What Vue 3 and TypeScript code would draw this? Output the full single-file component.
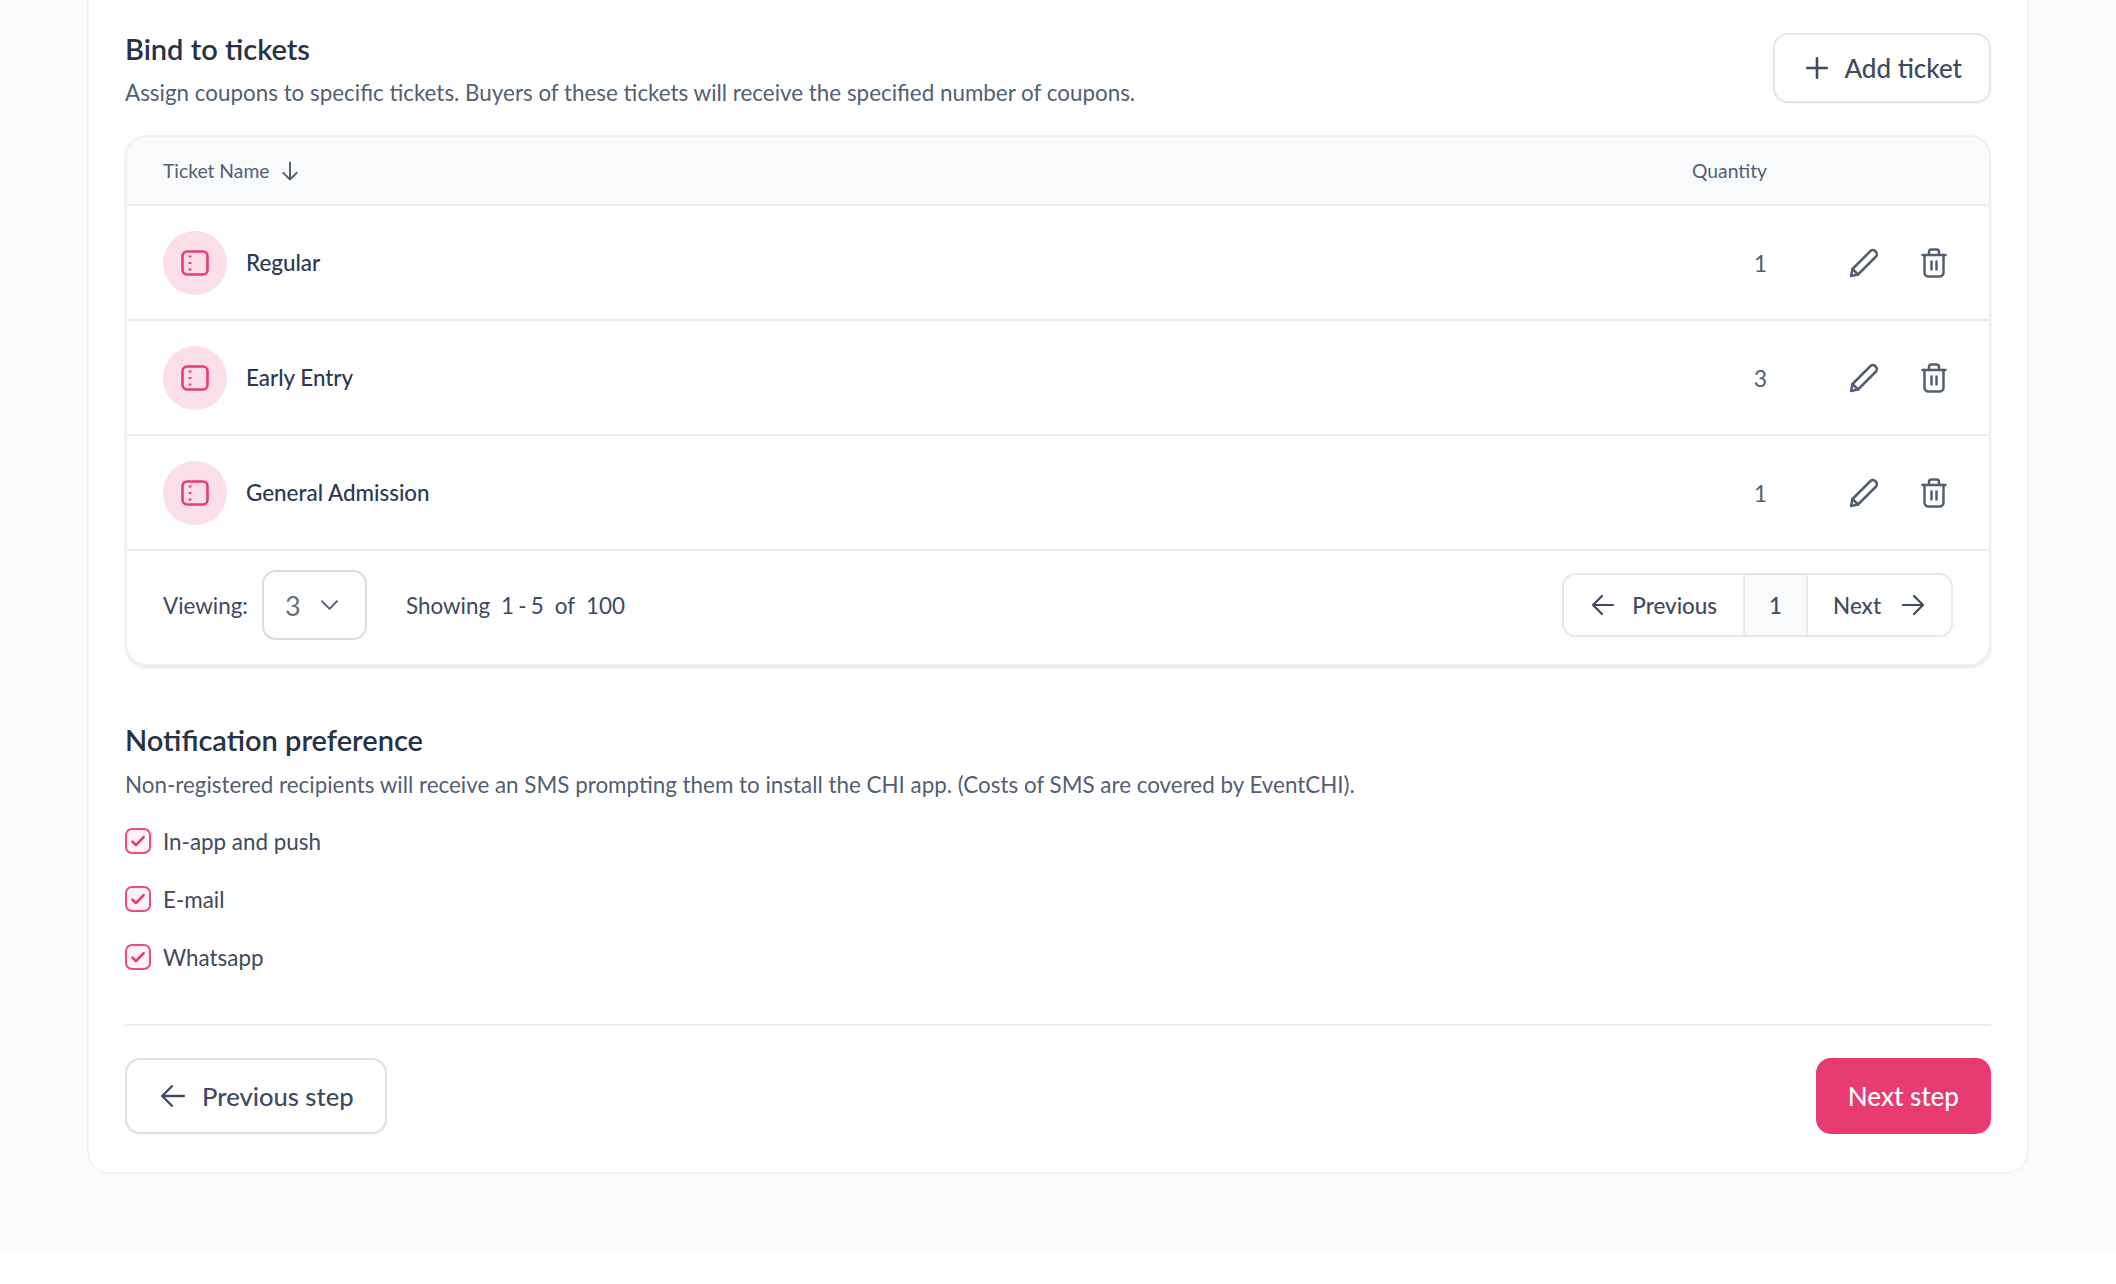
<template>
  <div class="page">
    <div class="card">
      <section class="bind">
        <div class="section-head">
          <div>
            <h2 class="section-title">Bind to tickets</h2>
            <p class="section-desc">
              Assign coupons to specific tickets. Buyers of these tickets will receive the specified number of coupons.
            </p>
          </div>
          <button class="btn add-btn">
            <svg class="icon-plus" viewBox="0 0 24 24" fill="none" stroke="currentColor" stroke-width="2.4" stroke-linecap="round">
              <path d="M12 3v18M3 12h18" />
            </svg>
            Add ticket
          </button>
        </div>

        <div class="table">
          <div class="table-head">
            <div class="col-name">
              Ticket Name
              <svg class="icon-sort" viewBox="0 0 18 18" fill="none" stroke="currentColor" stroke-width="1.6" stroke-linecap="round" stroke-linejoin="round">
                <path d="M9 2v14M3.5 10.5 9 16l5.5-5.5" />
              </svg>
            </div>
            <div class="col-qty">Quantity</div>
            <div class="col-actions"></div>
          </div>

          <div v-for="ticket in tickets" :key="ticket.name" class="table-row">
            <div class="col-name">
              <span class="ticket-badge">
                <svg viewBox="0 0 28 26" fill="none" stroke="#e83b72" stroke-width="2.6">
                  <rect x="1.5" y="1.5" width="25" height="23" rx="4.5" />
                  <path d="M9 5.5v2M9 12v2M9 18.5v2" stroke-width="2.8" />
                </svg>
              </span>
              <span class="ticket-name">{{ ticket.name }}</span>
            </div>
            <div class="col-qty qty-value">{{ ticket.quantity }}</div>
            <div class="col-actions">
              <svg class="icon-edit" viewBox="0 0 30 30" fill="none" stroke="currentColor" stroke-width="2.5" stroke-linecap="round" stroke-linejoin="round">
                <path d="M2 28l1.5-7L21.5 3a3.2 3.2 0 0 1 4.5 0l1 1a3.2 3.2 0 0 1 0 4.5L9 26.5z" />
                <path d="M3.5 21 9 26.5" />
              </svg>
              <svg class="icon-trash" viewBox="0 0 26 30" fill="none" stroke="currentColor" stroke-width="2.5" stroke-linecap="round" stroke-linejoin="round">
                <path d="M1.5 7h23M8 7V4a2.5 2.5 0 0 1 2.5-2.5h5A2.5 2.5 0 0 1 18 4v3" />
                <path d="M3.5 7v17.5a4 4 0 0 0 4 4h11a4 4 0 0 0 4-4V7" />
                <path d="M10.5 13.5v8M15.5 13.5v8" />
              </svg>
            </div>
          </div>

          <div class="table-foot">
            <div class="viewing">
              <span class="viewing-label">Viewing:</span>
              <div class="select">
                <span>3</span>
                <svg viewBox="0 0 20 12" fill="none" stroke="currentColor" stroke-width="2" stroke-linecap="round" stroke-linejoin="round">
                  <path d="M2 2l8 8 8-8" />
                </svg>
              </div>
              <div class="showing">
                <span>Showing</span>
                <span class="range">1 - 5</span>
                <span>of</span>
                <span>100</span>
              </div>
            </div>
            <div class="pager">
              <button class="pager-btn pager-prev">
                <svg class="icon-arrow" viewBox="0 0 24 24" fill="none" stroke="currentColor" stroke-width="2.2" stroke-linecap="round" stroke-linejoin="round">
                  <path d="M22 12H2M11 3l-9 9 9 9" />
                </svg>
                Previous
              </button>
              <span class="pager-num">1</span>
              <button class="pager-btn pager-next">
                Next
                <svg class="icon-arrow" viewBox="0 0 24 24" fill="none" stroke="currentColor" stroke-width="2.2" stroke-linecap="round" stroke-linejoin="round">
                  <path d="M2 12h20M13 3l9 9-9 9" />
                </svg>
              </button>
            </div>
          </div>
        </div>
      </section>

      <section class="notify">
        <h2 class="section-title">Notification preference</h2>
        <p class="section-desc">
          Non-registered recipients will receive an SMS prompting them to install the CHI app. (Costs of SMS are covered by EventCHI).
        </p>
        <div class="checks">
          <label v-for="channel in channels" :key="channel" class="check">
            <span class="checkbox">
              <svg viewBox="0 0 16 16" fill="none" stroke="#e83b72" stroke-width="2.3" stroke-linecap="round" stroke-linejoin="round">
                <path d="M3 8.5l3.2 3.2L13 4.5" />
              </svg>
            </span>
            {{ channel }}
          </label>
        </div>
      </section>

      <div class="steps">
        <button class="btn step-btn">
          <svg class="icon-step" viewBox="0 0 24 24" fill="none" stroke="currentColor" stroke-width="2.2" stroke-linecap="round" stroke-linejoin="round">
            <path d="M22 12H2M11 3l-9 9 9 9" />
          </svg>
          Previous step
        </button>
        <button class="btn next-btn">Next step</button>
      </div>
    </div>
  </div>
</template>

<script setup lang="ts">
interface Ticket {
  name: string;
  quantity: number;
}

const tickets: Ticket[] = [
  { name: "Regular", quantity: 1 },
  { name: "Early Entry", quantity: 3 },
  { name: "General Admission", quantity: 1 },
];

const channels = ["In-app and push", "E-mail", "Whatsapp"];
</script>

<style scoped>
.page {
  height: 1251px;
  box-sizing: border-box;
  padding: 0 87px;
  background: #fbfbfc;
  font-family: "Lato", sans-serif;
  color: #3d4a60;
}
.card {
  box-sizing: border-box;
  height: 1174px;
  padding: 31px 36px 0;
  background: #fff;
  border: 2px solid #f0f1f4;
  border-top: none;
  border-radius: 0 0 22px 22px;
}
.section-head {
  display: flex;
  justify-content: space-between;
  align-items: flex-start;
  height: 104px;
}
.section-title {
  margin: 0;
  font-size: 29px;
  line-height: 36px;
  font-weight: 600;
  color: #263246;
}
.section-desc {
  margin: 11px 0 0;
  font-size: 22.4px;
  line-height: 30px;
  color: #525f73;
}
.btn {
  box-sizing: border-box;
  display: inline-flex;
  align-items: center;
  font-family: inherit;
  font-weight: 500;
  background: #fff;
  color: #3d4a60;
  cursor: pointer;
}
.add-btn {
  height: 70px;
  margin-top: 2px;
  padding: 0 27px 0 29px;
  gap: 14px;
  font-size: 26px;
  border: 2px solid #e4e7ec;
  border-radius: 15px;
  box-shadow: 0 1px 2px rgba(16, 24, 40, 0.05);
}
.icon-plus {
  width: 26px;
  height: 26px;
}
.table {
  border: 2px solid #eef0f3;
  border-radius: 22px;
  overflow: hidden;
  box-shadow: 0 2px 3px rgba(16, 24, 40, 0.1);
}
.table-head,
.table-row {
  display: flex;
  align-items: center;
  padding: 0 36px;
}
.table-head {
  height: 67px;
  background: #f9fafb;
  border-bottom: 2px solid #eaecf0;
  font-size: 19.3px;
  color: #525f73;
}
.table-row {
  height: 113px;
  border-bottom: 2px solid #eaecf0;
}
.col-name {
  flex: 1;
  display: flex;
  align-items: center;
  gap: 10px;
}
.col-qty {
  width: 100px;
  text-align: right;
}
.col-actions {
  width: 186px;
  display: flex;
  align-items: center;
  justify-content: flex-end;
  gap: 42px;
  color: #525f73;
}
.icon-sort {
  width: 22px;
  height: 22px;
}
.ticket-badge {
  width: 64px;
  height: 64px;
  margin-right: 9px;
  border-radius: 50%;
  background: #fbdfe8;
  display: flex;
  align-items: center;
  justify-content: center;
}
.ticket-badge svg {
  width: 28px;
  height: 26px;
}
.ticket-name {
  font-size: 22.4px;
  font-weight: 500;
  color: #2b3950;
}
.qty-value {
  font-size: 23px;
  color: #525f73;
}
.icon-edit {
  width: 30px;
  height: 30px;
}
.icon-trash {
  width: 26px;
  height: 30px;
  margin-right: 6px;
}
.table-foot {
  box-sizing: border-box;
  height: 113px;
  padding: 0 36px 5px;
  display: flex;
  align-items: center;
  justify-content: space-between;
}
.viewing {
  display: flex;
  align-items: center;
  font-size: 22.4px;
}
.viewing-label {
  margin-right: 14px;
}
.select {
  box-sizing: border-box;
  width: 105px;
  height: 70px;
  padding: 0 26px 0 21px;
  display: flex;
  align-items: center;
  justify-content: space-between;
  border: 2px solid #d8dce3;
  border-radius: 14px;
  font-size: 27px;
  color: #667085;
}
.select svg {
  width: 19px;
  height: 12px;
  color: #525f73;
}
.showing {
  margin-left: 39px;
  display: flex;
  gap: 11px;
}
.range {
  word-spacing: -1.5px;
}
.pager {
  display: flex;
  height: 64px;
  box-sizing: border-box;
  border: 2px solid #e4e7ec;
  border-radius: 14px;
  overflow: hidden;
}
.pager-btn {
  border: none;
  background: #fff;
  display: flex;
  align-items: center;
  font-family: inherit;
  font-size: 22.4px;
  font-weight: 500;
  color: #3d4a60;
}
.pager-prev {
  padding: 0 26px 0 27px;
  gap: 17px;
}
.pager-next {
  padding: 0 26px 0 25px;
  gap: 20px;
}
.icon-arrow {
  width: 24px;
  height: 24px;
}
.pager-num {
  width: 65px;
  display: flex;
  align-items: center;
  justify-content: center;
  background: #f9fafb;
  border-left: 2px solid #e8eaee;
  border-right: 2px solid #e8eaee;
  box-sizing: border-box;
  font-size: 22.4px;
  font-weight: 500;
}
.notify {
  margin-top: 56px;
}
.notify .section-desc {
  margin-top: 12px;
}
.checks {
  margin-top: 12px;
}
.check {
  display: flex;
  align-items: center;
  gap: 12px;
  height: 58px;
  font-size: 22.4px;
  color: #3d4a60;
}
.checkbox {
  box-sizing: border-box;
  width: 26px;
  height: 26px;
  border: 2px solid #ec4c7e;
  border-radius: 7px;
  background: #fdf2f6;
  display: flex;
  align-items: center;
  justify-content: center;
}
.checkbox svg {
  width: 18px;
  height: 18px;
}
.steps {
  margin-top: 38px;
  padding-top: 32px;
  border-top: 2px solid #eaecf0;
  display: flex;
  justify-content: space-between;
}
.step-btn {
  height: 76px;
  padding: 0 31px 0 33px;
  gap: 16px;
  font-size: 25.6px;
  border: 2px solid #dde0e6;
  border-radius: 15px;
  box-shadow: 0 1px 2px rgba(16, 24, 40, 0.05);
}
.icon-step {
  width: 26px;
  height: 26px;
}
.next-btn {
  height: 76px;
  padding: 0 32px;
  border: none;
  border-radius: 15px;
  font-size: 26px;
  background: #e83b72;
  color: #fff;
}
</style>

<style>
body {
  background: #fff;
}
</style>
